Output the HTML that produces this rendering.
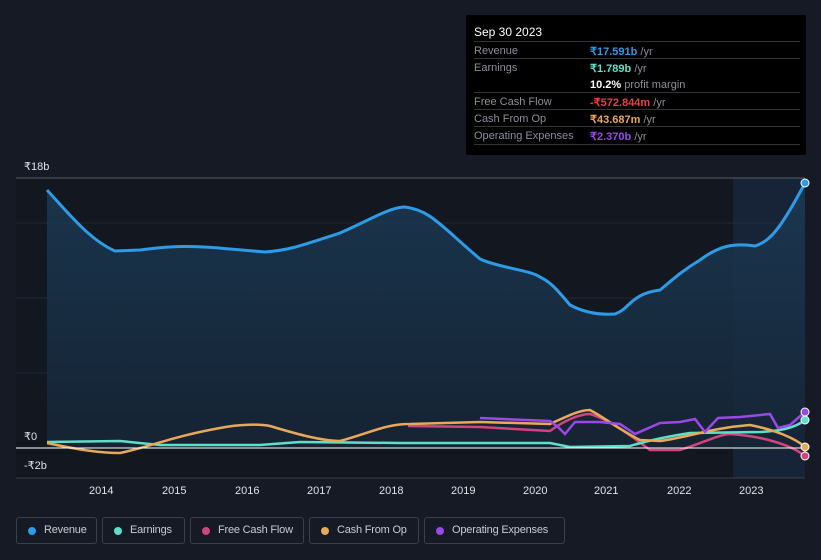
<!DOCTYPE html><html><head><style>
html,body{margin:0;width:821px;height:560px;overflow:hidden}
body{background:#151a24;font-family:"Liberation Sans",sans-serif;position:relative}
.tt{position:absolute;left:466px;top:15px;width:340px;height:140px;background:#000;border-radius:2px;font-size:11px;color:#8a8f98}
.tt .h{color:#fff;font-size:12px;position:absolute;left:8px;top:10px}
.row{position:absolute;left:8px;width:326px;border-top:1px solid #333}
.row span{position:absolute;left:0;top:3px}.row b{position:absolute;left:116px;top:3px;font-weight:bold;white-space:nowrap}
.lg{position:absolute;top:517px;height:27px;border:1px solid #3a3f4a;border-radius:3px;color:#c9ccd2;font-size:11px;line-height:25px;box-sizing:border-box;padding-left:27px;white-space:nowrap;letter-spacing:-0.2px}
.lg i{position:absolute;left:11px;top:9px;width:8px;height:8px;border-radius:50%}
.ax{position:absolute;color:#e0e2e6;font-size:11px}
</style></head><body>
<svg width="821" height="560" style="position:absolute;left:0;top:0">
<defs><linearGradient id="g" x1="0" y1="0" x2="0" y2="1"><stop offset="0" stop-color="#1b3a55"/><stop offset="1" stop-color="#162536"/></linearGradient></defs>
<rect x="16" y="178" width="717" height="300" fill="#121720"/>
<rect x="733" y="178" width="72" height="300" fill="#172437"/>
<line x1="16" y1="178" x2="805" y2="178" stroke="#555b66"/>
<line x1="16" y1="223" x2="805" y2="223" stroke="#232a36"/>
<line x1="16" y1="298" x2="805" y2="298" stroke="#232a36"/>
<line x1="16" y1="373" x2="805" y2="373" stroke="#232a36"/>
<line x1="16" y1="478" x2="805" y2="478" stroke="#3a3f4a"/>
<path d="M47,190 C70,215 90,240 115,251 L140,250 C170,246 190,245 230,249 L265,252 C290,250 300,246 340,233 C370,220 390,207 405,207 C430,210 440,225 480,259 C500,268 530,270 540,277 C550,282 555,287 570,305 C585,313 600,315 615,314 C630,309 630,294 660,290 C670,282 680,272 700,260 C720,245 735,243 755,246 C770,241 780,230 805,183 L805,448 L47,448Z" fill="url(#g)" opacity=".85"/>
<path d="M47,190 C70,215 90,240 115,251 L140,250 C170,246 190,245 230,249 L265,252 C290,250 300,246 340,233 C370,220 390,207 405,207 C430,210 440,225 480,259 C500,268 530,270 540,277 C550,282 555,287 570,305 C585,313 600,315 615,314 C630,309 630,294 660,290 C670,282 680,272 700,260 C720,245 735,243 755,246 C770,241 780,230 805,183" fill="none" stroke="#2d9be6" stroke-width="3"/>
<path d="M408,426 L480,427 L550,431 C565,420 580,414 590,414 C610,420 630,435 650,450 L680,450 C700,444 720,434 730,434 C760,436 790,444 805,456" fill="none" stroke="#d0457e" stroke-width="2.5"/>
<path d="M47,442 L120,441 L160,445 L260,445 L300,442 L400,443 L550,443 L570,447 L630,446 C650,440 670,436 690,433 L760,432 C780,431 795,428 805,420" fill="none" stroke="#5ee0c8" stroke-width="2.5"/>
<path d="M47,443 C80,450 100,453 120,453 C150,447 170,437 220,428 C240,424 260,424 270,426 C290,432 320,441 340,441 C370,433 385,424 410,424 L480,422 L550,424 C570,415 580,410 590,410 C605,418 620,430 640,440 L660,441 C690,437 710,428 750,425 C775,430 795,438 805,447" fill="none" stroke="#e8a95a" stroke-width="2.5"/>
<path d="M480,418 L550,421 L558,427 L565,434 L575,422 L600,422 L620,424 L635,434 L660,423 L680,422 L695,419 L705,432 L718,418 L740,417 L770,414 L778,428 L790,425 L805,412" fill="none" stroke="#9b48e8" stroke-width="2.5"/>
<line x1="16" y1="448" x2="805" y2="448" stroke="#fff" stroke-width="1"/>
<circle cx="805" cy="183" r="4" fill="#2d9be6" stroke="#fff"/>
<circle cx="805" cy="412" r="4" fill="#9b48e8" stroke="#fff"/>
<circle cx="805" cy="420" r="4" fill="#5ee0c8" stroke="#fff"/>
<circle cx="805" cy="447" r="4" fill="#e8a95a" stroke="#fff"/>
<circle cx="805" cy="456" r="4" fill="#d0457e" stroke="#fff"/>
</svg>
<div class="ax" style="left:24px;top:160px">₹18b</div>
<div class="ax" style="left:24px;top:430px">₹0</div>
<div class="ax" style="left:24px;top:459px">-₹2b</div>
<div class="ax" style="left:89px;top:485px">2014</div><div class="ax" style="left:162px;top:485px">2015</div><div class="ax" style="left:235px;top:485px">2016</div><div class="ax" style="left:307px;top:485px">2017</div><div class="ax" style="left:379px;top:485px">2018</div><div class="ax" style="left:451px;top:485px">2019</div><div class="ax" style="left:523px;top:485px">2020</div><div class="ax" style="left:594px;top:485px">2021</div><div class="ax" style="left:667px;top:485px">2022</div><div class="ax" style="left:739px;top:485px">2023</div>
<div class="tt"><div class="h">Sep 30 2023</div>
<div class="row" style="top:26px"><span>Revenue</span><b style="color:#2d9be6">₹17.591b <span style="position:static;color:#8a8f98;font-weight:normal">/yr</span></b></div>
<div class="row" style="top:43px"><span>Earnings</span><b style="color:#5ee0c8">₹1.789b <span style="position:static;color:#8a8f98;font-weight:normal">/yr</span></b><b style="top:20px;color:#fff">10.2% <span style="position:static;color:#8a8f98;font-weight:normal">profit margin</span></b></div>
<div class="row" style="top:77px"><span>Free Cash Flow</span><b style="color:#e8423f">-₹572.844m <span style="position:static;color:#8a8f98;font-weight:normal">/yr</span></b></div>
<div class="row" style="top:94px"><span>Cash From Op</span><b style="color:#e8a95a">₹43.687m <span style="position:static;color:#8a8f98;font-weight:normal">/yr</span></b></div>
<div class="row" style="top:111px"><span>Operating Expenses</span><b style="color:#9b48e8">₹2.370b <span style="position:static;color:#8a8f98;font-weight:normal">/yr</span></b></div>
<div class="row" style="top:129px"></div>
</div>
<div class="lg" style="left:16px;width:81px"><i style="background:#2d9be6"></i>Revenue</div>
<div class="lg" style="left:102px;width:83px"><i style="background:#5ee0c8"></i>Earnings</div>
<div class="lg" style="left:190px;width:114px"><i style="background:#d0457e"></i>Free Cash Flow</div>
<div class="lg" style="left:309px;width:110px"><i style="background:#e8a95a"></i>Cash From Op</div>
<div class="lg" style="left:424px;width:141px"><i style="background:#9b48e8"></i>Operating Expenses</div>
</body></html>
